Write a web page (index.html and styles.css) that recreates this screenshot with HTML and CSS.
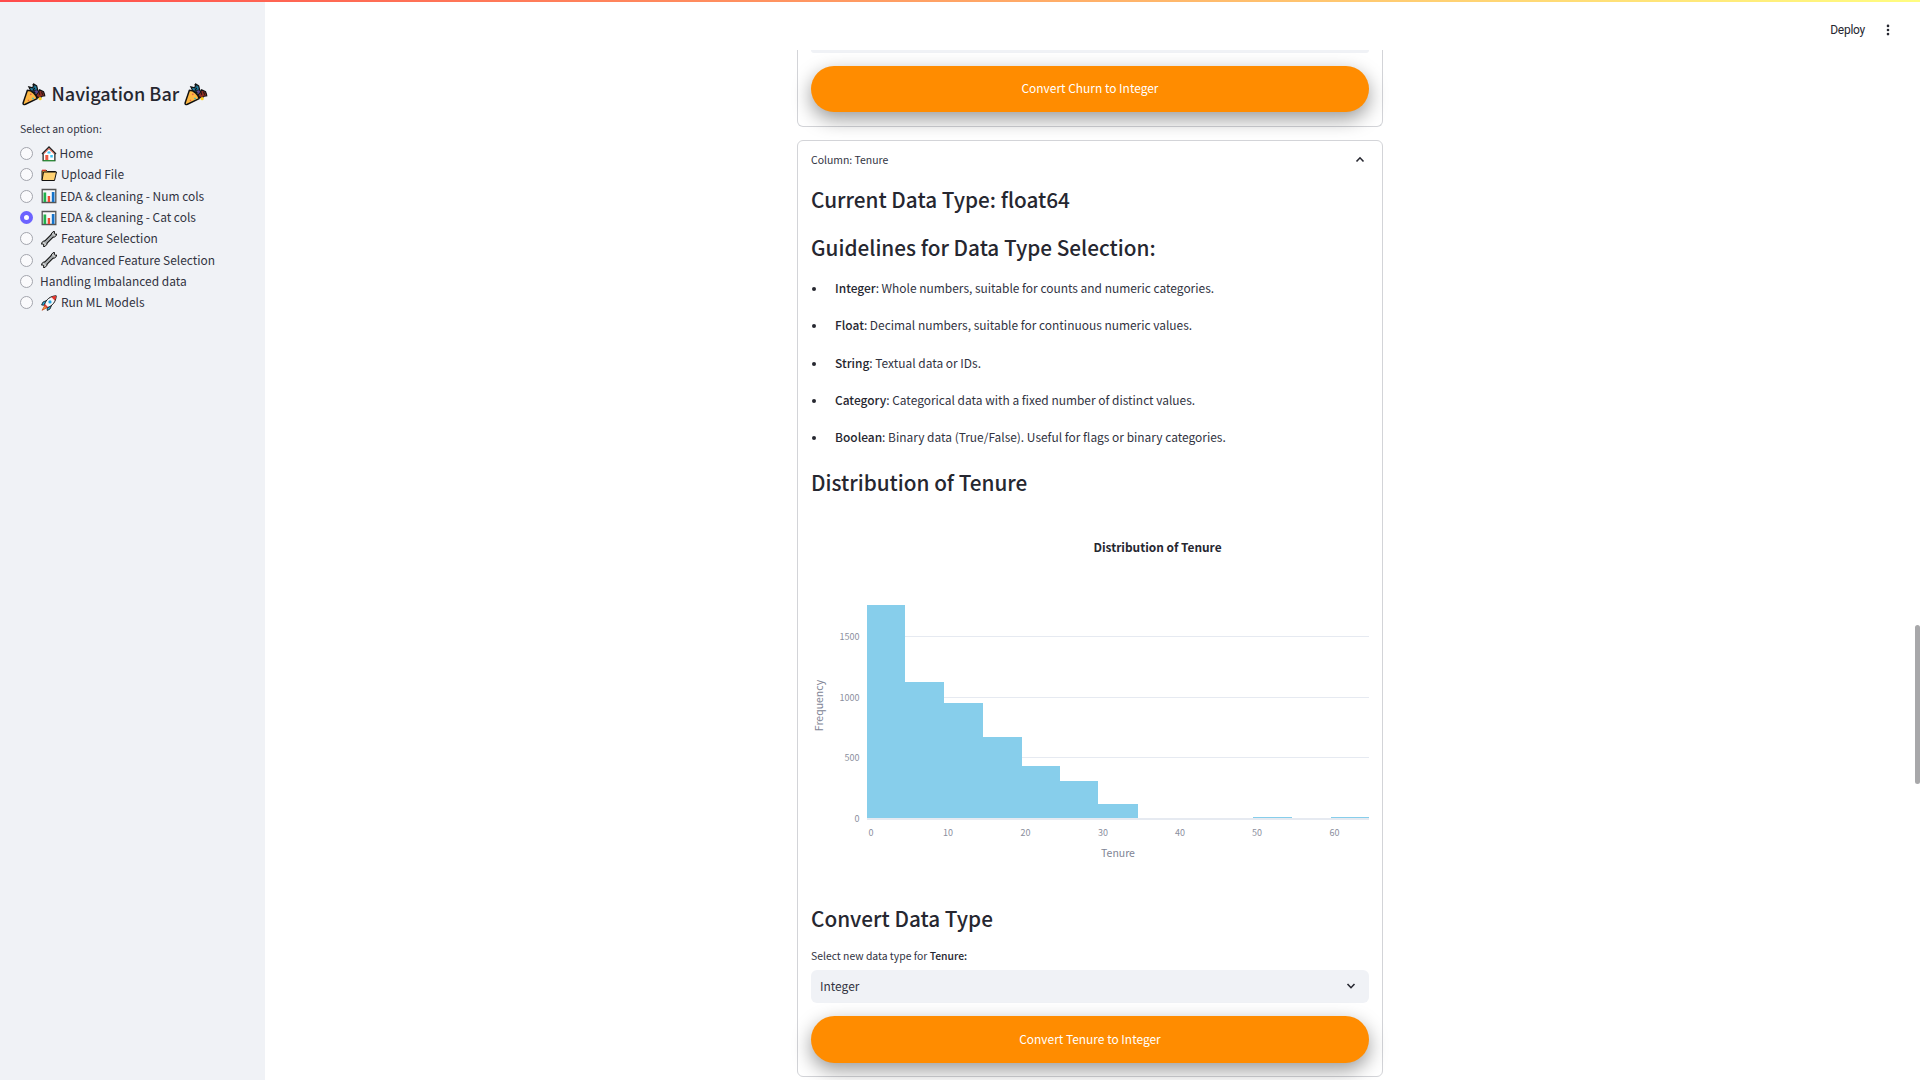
FILE: index.html
```html
<!DOCTYPE html>
<html lang="en">
<head>
<meta charset="utf-8">
<title>Data Types</title>
<link rel="stylesheet" href="styles.css">
</head>
<body>
<svg class="defs" width="0" height="0" aria-hidden="true">
  <symbol id="party" viewBox="0 0 24 24">
    <path d="M7 5l4 1 1-4 3 2 1 4-3 3-4-2z" fill="#1f7ea1" stroke="#111" stroke-width="1.2"/>
    <path d="M11 2l1.500 2.500M13 6l-2 3" stroke="#111" stroke-width="1.200"/>
    <path d="M14 13l4-5 4 2 1.500 4-3 .5-2 2-3-1z" fill="#8d2f22" stroke="#111" stroke-width="1.200"/>
    <path d="M12 9l3-1 2 2-2 3z" fill="#5a4690" stroke="#111" stroke-width=".8"/>
    <path d="M17 9l1 4M20 10l1 3" stroke="#111"/>
    <circle cx="18.500" cy="17" r="1.700" fill="#ffd21f"/>
    <path d="M5.500 8.500c4.500 0 9 4 10 8.500L3 23c-1.500.5-2.200-.5-1.800-1.800z" fill="#fdb844" stroke="#111" stroke-width="1.500" stroke-linejoin="round"/>
    <path d="M8.500 12l1 1M6 19l1-.5" stroke="#e2574c" stroke-width="1.600"/>
    <path d="M10.500 16.500l1.500.5" stroke="#35c0c9" stroke-width="1.600"/>
  </symbol>
  <symbol id="home" viewBox="0 0 16 16">
    <path d="M2.500 7L8 1.500 13.500 7v7.500h-11z" fill="#fff" stroke="#777" stroke-width=".8"/>
    <path d="M1 8l7-7 7 7" fill="none" stroke="#222" stroke-width="1.300"/>
    <path d="M3 7.500L8 2.700l5 4.800" fill="none" stroke="#e8452f" stroke-width="1"/>
    <path d="M6.500 5.500h3v2h-3zM9.300 9h2.500v2.500H9.300z" fill="#3fc3f5"/>
    <path d="M4.300 9h3v5.500h-3z" fill="#ee5a43"/>
    <path d="M1.500 14.700h13" stroke="#2f8b3a" stroke-width="1.400"/>
    <path d="M2 8v6.500M14 8v6.500" stroke="#222"/>
  </symbol>
  <symbol id="folder" viewBox="0 0 16 16">
    <path d="M1 13.300V3.500h4.500l1 1h8V6" fill="#f2a93b" stroke="#111" stroke-width="1"/>
    <path d="M1 3.300h4" stroke="#e03b2f" stroke-width="1.300"/>
    <path d="M1 13.500L2.500 5h13l-2 8.500z" fill="#ffd273" stroke="#111" stroke-width="1" stroke-linejoin="round"/>
  </symbol>
  <symbol id="bars" viewBox="0 0 16 16">
    <path d="M1.200 1.500h13.600v13H1.200z" fill="#fafafa" stroke="#555" stroke-width="1.300"/>
    <path d="M2.500 4.500h2.700V14H2.500z" fill="#22b14c"/>
    <path d="M6.700 8h2.400v6H6.700z" fill="#ee4b35"/>
    <path d="M10.800 4h2.700v10h-2.700z" fill="#1673c9"/>
  </symbol>
  <symbol id="wrench" viewBox="0 0 16 16">
    <path d="M3.500 12.500l9-9" stroke="#111" stroke-width="4.200"/>
    <path d="M.8 11.500l2-1.500 2.700.5.500 2.700-2 2.300-1.500.2.300-2-.9-.7-1.300.2zM10.200 3l1.800-2.300 1.500-.2-.2 2 .8.700 1.600-.2-.5 1.700-2 1.500-2.500-.7z" fill="#c9cccd" stroke="#111" stroke-width="1" stroke-linejoin="round"/>
    <path d="M4 12l8-8" stroke="#a9adaf" stroke-width="2.200"/>
  </symbol>
  <symbol id="rocket" viewBox="0 0 16 16">
    <path d="M3.500 11L1 15.300 5.500 13z" fill="#ff9d2e" stroke="#b8431b" stroke-width=".7"/>
    <path d="M5.500 5.500L2 7 .6 10l3.700.3zM10.500 10.500L9 14l-2.700 1.500-.2-3.800z" fill="#25b1e8" stroke="#111" stroke-width=".8"/>
    <path d="M3.500 9.500C5 4.500 9.300 1 15.200.8 15 6.700 11.300 11 6.500 12.600z" fill="#f4f6f8" stroke="#111" stroke-width="1"/>
    <path d="M10.500 2.200C12 1.300 13.500.9 15.200.8c-.1 1.700-.5 3.200-1.400 4.700z" fill="#e4352d"/>
    <circle cx="9" cy="6.900" r="1.600" fill="#25a6e0"/>
    <path d="M3.500 9.600l2.900 2.900" stroke="#e4352d" stroke-width="1.500"/>
  </symbol>
</svg>

<div class="app">
  <div class="decoration"></div>

  <aside class="sidebar">
    <h2 class="nav-title"><svg class="party"><use href="#party"/></svg><span>Navigation Bar</span><svg class="party"><use href="#party"/></svg></h2>
    <p class="nav-label">Select an option:</p>
    <ul class="nav">
      <li class="option"><i class="radio"></i><svg class="emoji emoji-s"><use href="#home"/></svg><span>Home</span></li>
      <li class="option"><i class="radio"></i><svg class="emoji emoji-l"><use href="#folder"/></svg><span>Upload File</span></li>
      <li class="option"><i class="radio"></i><svg class="emoji emoji-m"><use href="#bars"/></svg><span>EDA &amp; cleaning - Num cols</span></li>
      <li class="option"><i class="radio radio-on"></i><svg class="emoji emoji-m"><use href="#bars"/></svg><span>EDA &amp; cleaning - Cat cols</span></li>
      <li class="option"><i class="radio"></i><svg class="emoji emoji-l"><use href="#wrench"/></svg><span>Feature Selection</span></li>
      <li class="option"><i class="radio"></i><svg class="emoji emoji-l"><use href="#wrench"/></svg><span>Advanced Feature Selection</span></li>
      <li class="option"><i class="radio"></i><span>Handling Imbalanced data</span></li>
      <li class="option"><i class="radio"></i><svg class="emoji emoji-l"><use href="#rocket"/></svg><span>Run ML Models</span></li>
    </ul>
  </aside>

  <main class="main">
    <header class="toolbar">
      <span class="deploy">Deploy</span>
      <svg class="kebab" viewBox="0 0 4 12"><circle cx="2" cy="1.900" r="1.300"/><circle cx="2" cy="6" r="1.300"/><circle cx="2" cy="10.100" r="1.300"/></svg>
    </header>

    <div class="content">
      <section class="card card-churn">
        <div class="select-end"></div>
        <button class="convert">Convert Churn to Integer</button>
      </section>

      <section class="card card-tenure">
        <div class="summary"><span>Column: Tenure</span>
          <svg class="chevron" viewBox="0 0 10 10"><path d="M1.500 6.500L5 2.800 8.500 6.500"/></svg>
        </div>
        <h3 class="heading">Current Data Type: float64</h3>
        <h3 class="heading heading-guide">Guidelines for Data Type Selection:</h3>
        <ul class="guide">
          <li><b>Integer</b>: Whole numbers, suitable for counts and numeric categories.</li>
          <li><b>Float</b>: Decimal numbers, suitable for continuous numeric values.</li>
          <li><b>String</b>: Textual data or IDs.</li>
          <li><b>Category</b>: Categorical data with a fixed number of distinct values.</li>
          <li><b>Boolean</b>: Binary data (True/False). Useful for flags or binary categories.</li>
        </ul>
        <h3 class="heading">Distribution of Tenure</h3>

        <svg class="chart" viewBox="0 0 558 410">
          <text class="chart-title" x="346.500" y="57" text-anchor="middle">Distribution of Tenure</text>
          <g class="grid">
            <path d="M56 141.500h502M56 202.500h502M56 262.500h502"/>
            <path class="zero" d="M56 324h502"/>
          </g>
          <g class="bars">
            <rect x="56" y="110" width="38" height="213"/>
            <rect x="94" y="187" width="39" height="136"/>
            <rect x="133" y="208" width="39" height="115"/>
            <rect x="172" y="242" width="39" height="81"/>
            <rect x="211" y="271" width="38" height="52"/>
            <rect x="249" y="286" width="38" height="37"/>
            <rect x="287" y="309" width="40" height="14"/>
            <rect x="442" y="322" width="39" height="1"/>
            <rect x="520" y="322" width="38" height="1"/>
          </g>
          <g class="ticks" text-anchor="end">
            <text x="48.500" y="145">1500</text><text x="48.500" y="206">1000</text><text x="48.500" y="266">500</text><text x="48.500" y="327">0</text>
          </g>
          <g class="ticks" text-anchor="middle">
            <text x="60" y="341">0</text><text x="137" y="341">10</text><text x="214.500" y="341">20</text><text x="292" y="341">30</text><text x="369" y="341">40</text><text x="446" y="341">50</text><text x="523.500" y="341">60</text>
          </g>
          <text class="axis" x="307" y="362" text-anchor="middle">Tenure</text>
          <text class="axis" transform="translate(11.500 210.500) rotate(-90)" text-anchor="middle">Frequency</text>
        </svg>

        <h3 class="heading">Convert Data Type</h3>
        <p class="field-label">Select new data type for <b>Tenure:</b></p>
        <div class="select"><span>Integer</span>
          <svg class="chevron" viewBox="0 0 10 10"><path d="M1.500 3L5 6.700 8.500 3"/></svg>
        </div>
        <button class="convert convert-tall">Convert Tenure to Integer</button>
      </section>
    </div>
  </main>
  <div class="scrollbar"></div>
</div>
</body>
</html>
```
FILE: styles.css
```css
* { box-sizing: border-box; margin: 0; padding: 0; }

body {
  height: 1080px;
  overflow: hidden;
  background: #fff;
  color: #31333f;
  font: 400 11.94px/20px "Noto Sans CJK JP", "Noto Sans", sans-serif;
}

b { font-weight: 500; color: #262730; }
ul { list-style: none; }
.defs { position: absolute; }

.app { position: relative; display: flex; height: 1080px; }

.decoration {
  position: absolute;
  inset: 0 0 auto 0;
  height: 2px;
  z-index: 3;
  background: linear-gradient(90deg, #ff4b4b, #fffd80);
}

/* Sidebar */
.sidebar { width: 265px; padding: 81px 0 0 20px; background: #f0f2f6; }

.nav-title {
  display: flex;
  align-items: center;
  height: 26px;
  padding-left: 2px;
  font-size: 18.1px;
  font-weight: 500;
  line-height: 24px;
  color: #262730;
}
.nav-title span { margin: 0 5px 2px 6px; }
.party { width: 23.500px; height: 23.500px; }

.nav-label { margin: 15px 0 7px; font-size: 10.45px; line-height: 14px; }

.option { display: flex; align-items: center; height: 21.3px; }
.option span { padding-bottom: 1px; }

.radio {
  width: 13px;
  height: 13px;
  margin-right: 7px;
  border: 1px solid #a3a5ad;
  border-radius: 50%;
  background: #fafafc;
}
.radio-on { border: 4px solid #6c63ff; background: #fff; }

.emoji { width: 16px; height: 16px; margin-left: .5px; }
.emoji-s { margin-right: 3px; }
.emoji-m { margin-right: 3.5px; }
.emoji-l { margin-right: 4.5px; }

/* Main column */
.main { flex: 1; display: flex; flex-direction: column; }

.toolbar {
  display: flex;
  justify-content: flex-end;
  align-items: center;
  flex: none;
  height: 50px;
  padding: 10px 30px 0 0;
  background: #fff;
}
.deploy { margin-right: 21px; font: 12px/20px Roboto, sans-serif; letter-spacing: -.25px; color: #262730; }
.kebab { width: 4px; height: 12px; fill: #262730; }

.content {
  flex: 1;
  display: flex;
  flex-direction: column;
  gap: 13px;
  padding-left: 532px;
  overflow: hidden;
}

.card {
  width: 586px;
  padding: 0 13px;
  border: 1px solid #d3d4d8;
  border-radius: 6px;
}
.card-churn { flex: none; height: 77px; border-top: 0; border-radius: 0 0 6px 6px; }
.card-tenure { flex: none; height: 937px; }

.select-end { height: 3px; margin-bottom: 13px; border-radius: 0 0 6px 6px; background: #f0f2f6; }

.convert {
  display: block;
  width: 558px;
  height: 46px;
  border: 0;
  border-radius: 24px;
  background: #ff8c00;
  box-shadow: 0 7px 19px rgba(0, 0, 0, .4);
  color: #fff;
  font: inherit;
  padding-bottom: 2px;
}
.convert-tall { height: 47px; margin-top: 13px; padding-bottom: 1px; }

.summary {
  display: flex;
  justify-content: space-between;
  align-items: center;
  height: 37px;
  padding-right: 4px;
  margin-bottom: 8px;
  font-size: 10.45px;
}
.chevron { width: 10px; height: 10px; fill: none; stroke: #262730; stroke-width: 1.6; }

.heading { height: 26px; font-size: 20.76px; font-weight: 500; line-height: 27px; color: #262730; }
.heading-guide { margin-top: 22px; }

.guide {
  display: grid;
  gap: 17.25px;
  margin: 18px 0 22px;
}
.guide li { display: flex; white-space: pre; }
.guide li::before {
  content: "";
  width: 4px;
  height: 4px;
  margin: 9px 19px 0 1px;
  border-radius: 50%;
  background: #262730;
}

/* Chart */
.chart { display: block; width: 558px; height: 410px; }
.chart-title { font-size: 11.9px; font-weight: 700; fill: #262730; }
.grid path { stroke: #e6eaf1; fill: none; }
.grid .zero { stroke-width: 2; }
.bars { fill: #87ceeb; }
.ticks { font-size: 9px; fill: #8b8f9e; }
.axis { font-size: 10.5px; fill: #808495; }

/* Form */
.field-label { margin: 18px 0 7px; font-size: 10.4px; line-height: 14px; }
.select {
  display: flex;
  justify-content: space-between;
  align-items: center;
  height: 33px;
  padding: 0 13px 1px 9px;
  border-radius: 6px;
  background: #f0f2f6;
}
.select span { padding-bottom: 1px; }

.scrollbar {
  position: absolute;
  right: 0;
  top: 625px;
  width: 5px;
  height: 159px;
  border-radius: 2.5px;
  background: #a8a8aa;
}
```
